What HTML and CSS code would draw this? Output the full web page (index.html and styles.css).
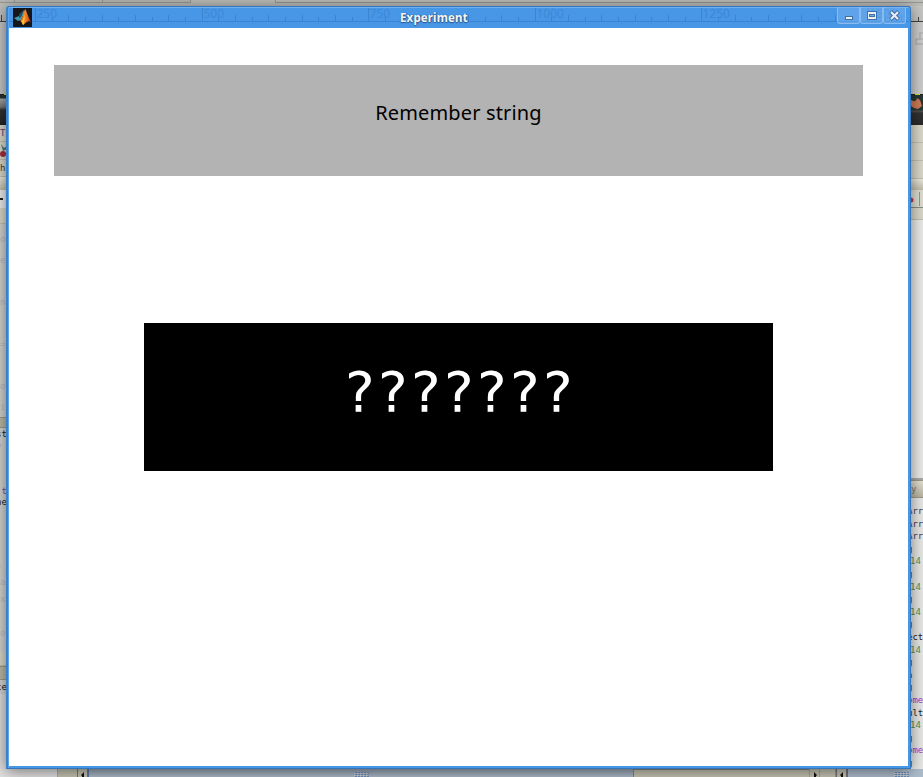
FILE: index.html
```html
<!DOCTYPE html>
<html lang="en">
<head>
<meta charset="utf-8">
<title>Experiment</title>
<link rel="stylesheet" href="styles.css">
</head>
<body>
<div class="desktop">
  <div class="tabs"><i></i><i></i><i></i><i class="gap"></i></div>
  <div class="middle">
    <div class="left">
      <div class="seg ruler-end"></div>
      <div class="seg l-canvas"></div>
      <div class="seg dark-top"></div>
      <div class="seg dark"></div>
      <div class="seg beige l-menu purple">Tp</div>
      <div class="seg beige l-cherry"><svg width="7" height="17"><path d="M1 2l3 4 3-2v3L3 9z" fill="#4c7770"/><circle cx="3" cy="12" r="3" fill="#a72e3f"/></svg></div>
      <div class="seg beige l-menu2">ha</div>
      <div class="seg head l-head"></div>
      <div class="seg field"><svg width="7" height="15"><path d="M0 9h3" stroke="#222" stroke-width="2"/></svg></div>
      <div class="seg beige l-bar"></div>
      <div class="seg ghost">o<br>e<br><br>n<br><br>=<br><br>o<br>i</div>
      <div class="seg tan l-tan"></div>
      <div class="seg pane l-st">st<span>o</span></div>
      <div class="seg pane l-t">&nbsp;t</div>
      <div class="seg pane l-ne">ne</div>
      <div class="seg pane ghost2">s<br>a<br>x<br><br>e</div>
      <div class="seg beige l-bar2"></div>
      <div class="seg tan l-tan2"></div>
      <div class="seg pane l-ce">ce</div>
      <div class="seg light"></div>
    </div>
    <div class="right">
      <div class="seg ruler-end r-ruler"></div>
      <div class="seg r-canvas"><svg width="13" height="71"><path d="M5 17h8v-6M5 17v5h8M9 17v-6h4" fill="none" stroke="#b4b4b2" stroke-width="1.5"/></svg></div>
      <div class="seg dark-top"></div>
      <div class="seg dark r-dark"><svg width="13" height="16"><path d="M0 5q5 3 6-2l3 2 2 6-4 3q-4 0-7-3z" fill="#cf7b53"/></svg></div>
      <div class="seg beige r-row"></div>
      <div class="seg beige r-row"></div>
      <div class="seg beige r-row"></div>
      <div class="seg head r-head"></div>
      <div class="seg beige r-tool"><svg width="13" height="18"><circle cx="0" cy="10" r="2.5" fill="#c73c56"/><path d="M8.5 2v14" stroke="#999990"/></svg></div>
      <div class="seg beige r-bar"></div>
      <div class="seg r-page"></div>
      <div class="seg tan r-title">y</div>
      <div class="seg code">
        <p>Arr</p><p>Arr</p><p>Arr</p><p>g</p><p class="g">14</p><p>g</p><p class="g">14</p><p>g</p><p class="g">14</p><p>g</p><p class="k">ect</p><p class="g">14</p><p>g</p><p>a</p><p>g</p><p class="v">ome</p><p class="k">ult</p><p class="g">14</p><p>g</p><p class="v">ome</p><p>g</p>
      </div>
    </div>
  </div>
  <div class="bottom">
    <div class="b-light"></div>
    <div class="b-gap"></div>
    <div class="b-arrow"><svg width="10" height="8"><path d="M6 3v5H4V7L3 6z" fill="#111"/></svg></div>
    <div class="thumb t1"><b></b></div>
    <div class="track"></div>
    <div class="b-arrow b2"><svg width="10" height="8"><path d="M4 3v5h2V7l1-1z" fill="#111"/></svg></div>
    <div class="b-gap2"></div>
    <div class="b-arrow b3"><svg width="10" height="8"><path d="M6 3v5H4V7L3 6z" fill="#111"/></svg></div>
    <div class="thumb t2"><b></b></div>
  </div>

  <div class="window">
    <header class="titlebar">
      <svg class="ruler" id="ruler" width="900" height="20"></svg>
      <svg class="logo" width="19" height="19" viewBox="0 0 19 19">
        <defs><linearGradient id="fl" x1="0" x2="1" y1="0" y2="0"><stop offset="0" stop-color="#8f2c1b"/><stop offset=".4" stop-color="#f58a27"/><stop offset=".6" stop-color="#f07a25"/><stop offset="1" stop-color="#b22c18"/></linearGradient></defs>
        <rect width="19" height="19" fill="#15171a"/>
        <path d="M1 10l5-2 5-6 1 2-4 8-3 1z" fill="#4197ad"/>
        <path d="M6 6l5-4-3 7-2 1z" fill="#254b60"/>
        <path d="M12.3 1C14 4 15.500 10 18 14c-3-2-4 0-8 3-1-2-1-4-4-4 4-2 4-8 6.300-12z" fill="url(#fl)"/>
        <path d="M8 13c2-1 3-4 4-7l-1 10-1 1z" fill="#ffc22f"/>
      </svg>
      <h1>Experiment</h1>
      <div class="buttons">
        <span><svg width="22" height="16"><rect x="7.500" y="9.500" width="7" height="3" fill="#eee" stroke="#3d71a9"/></svg></span>
        <span><svg width="22" height="16"><rect x="6.500" y="4.500" width="9" height="8" fill="#eee" stroke="#3d71a9"/><rect x="8.500" y="7.500" width="5" height="2" fill="#78aee6" stroke="#3d71a9"/></svg></span>
        <span><svg width="22" height="16"><path d="M6.500 4.500l8 8M14.500 4.500l-8 8" stroke="#3d71a9" stroke-width="4"/><path d="M7 5l7 7M14 5l-7 7" stroke="#eee" stroke-width="2"/></svg></span>
      </div>
    </header>
    <main>
      <div class="prompt">Remember string</div>
      <div class="stimulus">???????</div>
    </main>
  </div>
</div>
<script src="ruler.js"></script>
</body>
</html>
```
FILE: styles.css
```css
* { box-sizing: border-box; }
body { margin: 0; }
p, h1 { margin: 0; }
.desktop {
  position: relative;
  width: 923px;
  height: 777px;
  overflow: hidden;
  display: flex;
  flex-direction: column;
  background: #c9c9c6;
  font: 9px/11px "DejaVu Sans Mono", monospace;
  color: #3a3038;
}
.tabs {
  height: 6px;
  flex: none;
  display: flex;
  background: linear-gradient(#bdbdba 0 2px, #959592 2px 3px, #bdbdba 3px);
}
.tabs i { height: 3px; background: #b8b8b5; border: solid #989895; border-width: 0 1px 1px 0; }
.tabs i:nth-child(1) { width: 15px; }
.tabs i:nth-child(2) { width: 88px; }
.tabs i:nth-child(3) { width: 88px; }
.tabs .gap { width: 85px; border-bottom: 0; background: #bebebb; }
.middle { height: 763px; flex: none; display: flex; justify-content: space-between; }
.left { width: 7px; overflow: hidden; }
.right { width: 12px; }
.seg { overflow: hidden; white-space: nowrap; }
.seg svg { display: block; }
.ruler-end { height: 16px; background: #bebebc; border-bottom: 1px solid #444; }
.left .ruler-end { background: linear-gradient(90deg, #bebebc 1px, #444 1px 2px, #bebebc 2px) 0 9px no-repeat, #bebebc; }
.r-ruler { background: linear-gradient(90deg, #c6c6c4 7px, #444 7px 8px, #c6c6c4 8px) 0 11px no-repeat, #c6c6c4; }
.l-canvas { height: 72px; background: #c6c6c6; }
.r-canvas { height: 72px; background: #cdcdcd; }
.dark-top { height: 1px; background: linear-gradient(90deg, #222 4px, #dddd20 4px 9px, #222 9px); }
.dark { height: 30px; background: linear-gradient(#273431 0 3px, #aaa 4px, #777 12px, #333 15px, #252525); }
.r-dark { background: linear-gradient(#263735 0 15px, #55544f 16px, #333 18px, #292929); }
.beige { background: #dbd9ca; border-bottom: 1px solid #c3c0b2; }
.l-menu { height: 17px; padding-top: 3px; }
.purple { color: #6d4377; }
.l-cherry { height: 18px; }
.l-menu2 { height: 17px; padding-top: 3px; }
.head { background: linear-gradient(#eceade, #c0bda9); }
.l-head { height: 13px; }
.field { height: 18px; background: #eee; }
.l-bar { height: 16px; }
.ghost { height: 193px; background: #d3d3d1; color: #b9b9c3; line-height: 21px; padding-top: 5px; }
.tan { background: #bebaa7; border: solid #9e9b8b; border-width: 1px 0; }
.l-tan { height: 11px; }
.pane { background: #d4d4d2; }
.l-st { height: 58px; padding-top: 1px; color: #222; }
.l-st span { display: block; color: #b9b9cb; }
.l-t { height: 11px; color: #884a9a; }
.l-ne { height: 12px; color: #222; }
.ghost2 { height: 143px; color: #bdbdc2; line-height: 17px; padding-top: 48px; }
.l-bar2 { height: 14px; }
.l-tan2 { height: 14px; }
.l-ce { height: 14px; padding-top: 2px; color: #111; }
.light { height: 75px; background: #dedede; }
.left .pane { text-indent: -4px; }
.r-row { height: 18px; }
.r-head { height: 11px; }
.r-tool { height: 18px; background: #e0dfd2; border-color: #8d8d85; }
.r-bar { height: 12px; }
.r-page { height: 260px; background: #ececea; border-bottom: 2px solid #aaa; }
.r-title { height: 18px; color: #777; padding-top: 3px; background: linear-gradient(#e6e3d4, #b9b5a0); }
.code { height: 271px; background: #e9e9e7; padding-top: 7px; line-height: 12.6px; color: #49355c; overflow: visible; }
.code p { margin-left: -4px; height: 12.6px; }
.code .g { color: #4f9253; margin-left: -1px; }
.code .v { color: #a137d4; }
.code .k { color: #252525; }
.bottom { height: 8px; display: flex; background: #c6c4b3; }
.b-light { width: 58px; background: #e2e2e2; border-right: 1px solid #aaa; }
.b-gap { width: 19px; }
.b-arrow { width: 11px; border: solid #777; border-width: 0 1px 0 1px; }
.b-arrow svg { display: block; }
.thumb { background: linear-gradient(#9aa7b8, #adbbca); display: flex; justify-content: center; padding-top: 3px; border-left: 1px solid #5476a7; }
.thumb b { width: 15px; height: 5px; background: conic-gradient(#738fbb 25%, transparent 0 50%, #c6d0dc 0 75%, transparent 0) 0 0 / 3px 2px; }
.t1 { width: 545px; }
.track { width: 176px; border: solid #898983; border-width: 1px 0 0 1px; }
.b2 { border-color: #a7a697; }
.b-gap2 { width: 16px; border-right: 1px solid #999; }
.t2 { flex: 1; background: #aebdcd; padding-left: 32px; }
.window {
  position: absolute;
  left: 6px;
  top: 6px;
  width: 905px;
  height: 763px;
  border: 1px solid #3576b8;
  border-radius: 3px 3px 0 0;
  background: #4896e6;
  padding: 0 2px 2px 2px;
  padding-left: 1px;
  border-left-width: 2px;
  border-left-color: #3c80c6;
  box-shadow: inset 0 1px #72aff0, inset 1px 0 #5ba5f0, 0 2px 16px rgba(0, 0, 0, .5);
}
.titlebar { height: 21px; display: flex; position: relative; }
.ruler { position: absolute; left: 0; top: 1px; font: 12px "Noto Sans", sans-serif; }
.ruler line { stroke: #3b84d2; }
.ruler text { fill: #3d88d8; }
.logo { margin: 1px 0 0 4px; position: relative; }
h1 {
  position: relative;
  flex: 1;
  padding-left: 368px;
  font: bold 11.500px/21px "Noto Sans", sans-serif;
  letter-spacing: .15px;
  color: #f4f4f4;
  text-shadow: 0 1px 1px #29588d, 1px 0 1px #29588d;
}
.buttons { display: flex; position: relative; height: 17px; margin-right: 2px; }
.buttons span {
  width: 23px;
  border: 1px solid #86bcf2;
  border-top: 0;
  border-radius: 0 0 3px 3px;
  background: rgba(130, 184, 240, .4);
}
.buttons svg { display: block; }
main {
  height: 738px;
  background: #fff;
  display: flex;
  flex-direction: column;
  align-items: center;
  padding-top: 37px;
}
.prompt {
  width: 809px;
  height: 111px;
  background: #b3b3b3;
  color: #000;
  text-align: center;
  font: 20px/95px "Noto Sans", sans-serif;
  letter-spacing: .15px;
}
.stimulus {
  width: 629px;
  height: 148px;
  margin-top: 147px;
  padding-left: 4px;
  background: #000;
  color: #fff;
  text-align: center;
  font: 56px/138px "DejaVu Sans", sans-serif;
  letter-spacing: 3.300px;
}
```
FILE: ruler.js
```javascript
const ruler = document.getElementById("ruler");
const step = 16.66;
let marks = '<line x1="0" x2="900" y1="13.5" y2="13.5"/>';
for (let i = -1; i < 53; i++) {
  const x = Math.round(26 + i * step) + 0.5;
  const major = i % 10 === 0;
  const top = major ? 0 : i % 2 ? 9 : 7;
  marks += `<line x1="${x}" x2="${x}" y1="${top}" y2="13.5"/>`;
  if (major) marks += `<text x="${x + 1}" y="10">${250 + i * 25}</text>`;
}
ruler.innerHTML = marks;
```
